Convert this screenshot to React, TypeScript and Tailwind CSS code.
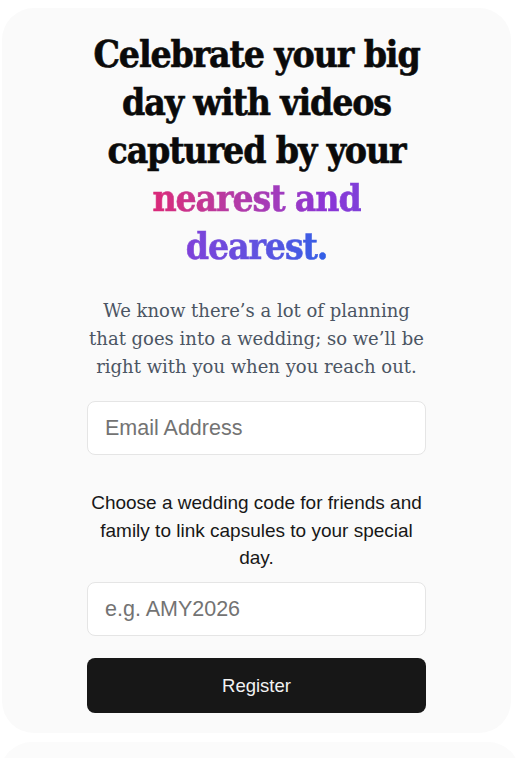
import React from "react";

export default function App() {
  return (
    <div className="h-[758px] w-[520px] bg-white overflow-hidden">
      <div className="ml-[2px] mt-2 w-[509px] rounded-[32px] bg-[#fafafa] pt-[22px] pb-[20px]">
        <div className="mx-auto flex w-[339px] flex-col">
          <h1 className="text-center text-[37px] leading-[48px] font-bold tracking-[-0.03em] text-[#0a0a0a] font-stretch-condensed whitespace-nowrap font-['DejaVu_Serif_Condensed','DejaVu_Serif',serif] [-webkit-text-stroke:0.6px_#0a0a0a]">
            Celebrate your big
            <br />
            day with videos
            <br />
            captured by your
            <br />
            <span className="bg-linear-to-r from-[#db2777] via-[#8b34d6] to-[#2f5fe6] bg-clip-text text-transparent [-webkit-text-stroke:0.6px_transparent]">
              nearest and
              <br />
              dearest.
            </span>
          </h1>
          <p className="mt-[27px] text-center text-[18px] leading-[28px] text-[#4b5563] font-['DejaVu_Serif',serif] whitespace-nowrap">
            We know there’s a lot of planning
            <br />
            that goes into a wedding; so we’ll be
            <br />
            right with you when you reach out.
          </p>
          <input
            type="email"
            placeholder="Email Address"
            className="mt-[20px] h-[54px] w-full rounded-lg border border-[#e5e5e5] bg-white px-[17px] text-[21.5px] font-['Liberation_Sans',Arial,sans-serif] text-[#171717] placeholder:text-[#737373] outline-none"
          />
          <p className="mt-[34px] text-center text-[19px] leading-[27.5px] text-[#171717] font-['Liberation_Sans',Arial,sans-serif]">
            Choose a wedding code for friends and family to link capsules to your special day.
          </p>
          <input
            type="text"
            placeholder="e.g. AMY2026"
            className="mt-[10.5px] h-[54px] w-full rounded-lg border border-[#e5e5e5] bg-white px-[17px] text-[21.5px] font-['Liberation_Sans',Arial,sans-serif] text-[#171717] placeholder:text-[#737373] outline-none"
          />
          <button className="mt-[22px] h-[55px] w-full rounded-lg bg-[#171717] text-[18.5px] text-[#f2f2f2] font-['Liberation_Sans',Arial,sans-serif]">
            Register
          </button>
        </div>
      </div>
      <div className="mt-[9px] h-[40px] w-[520px] rounded-t-[32px] bg-[#fbfbfb]" />
    </div>
  );
}
